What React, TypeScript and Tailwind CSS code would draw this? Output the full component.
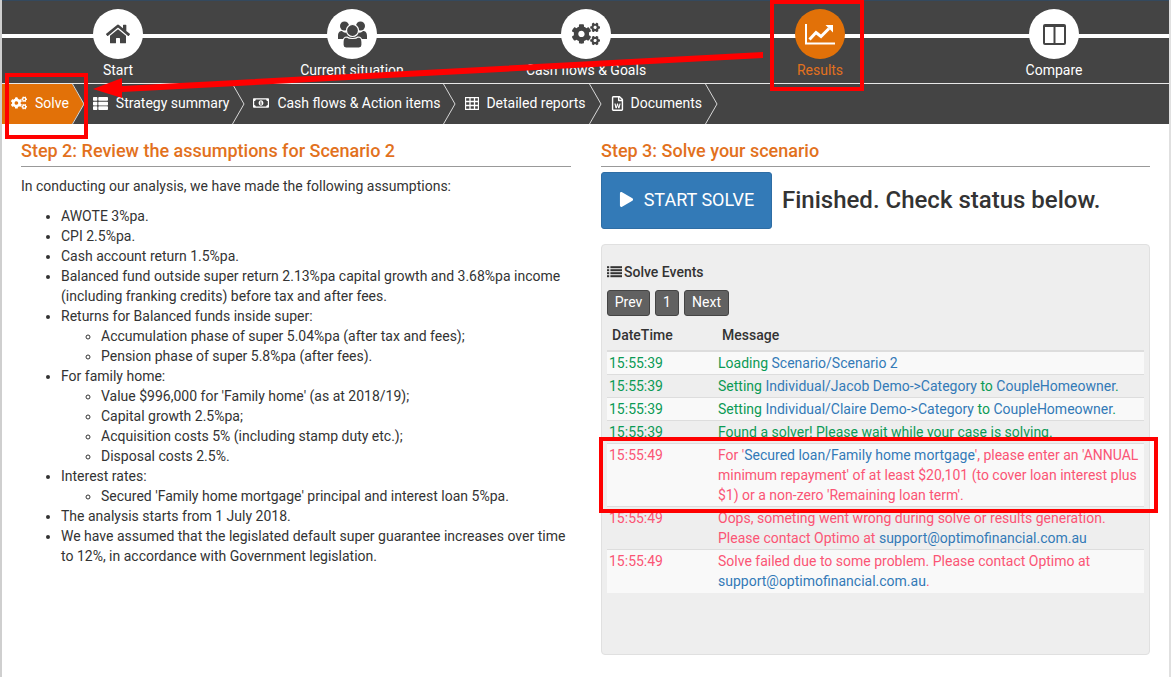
import React from "react";
import { FaHome, FaCogs, FaThList, FaRegMoneyBillAlt, FaRegFileWord, FaPlay } from "react-icons/fa";

const UsersIcon = () => (
  <svg width="29" height="27" viewBox="0 0 29 27">
    <circle cx="6.5" cy="5" r="4.5" fill="#444" />
    <circle cx="22.5" cy="5" r="4.5" fill="#444" />
    <path d="M0 15 C0 11 2 10 4 10 C6 12 8 12 9 11 L20 11 C21 12 23 12 25 10 C27 10 29 11 29 15 L29 18 L0 18 Z" fill="#444" />
    <circle cx="14.5" cy="9.5" r="6" fill="#444" stroke="#fff" strokeWidth="1.2" />
    <path d="M5 21 C5 17.5 7 16 9 16 C11 18 18 18 20 16 C22 16 24 17.5 24 21 L24 24 C24 26 22.5 27 21 27 L8 27 C6.5 27 5 26 5 24 Z" fill="#444" stroke="#fff" strokeWidth="1.2" />
  </svg>
);

const ChartIcon = () => (
  <svg width="30" height="21" viewBox="0 0 30 21">
    <path d="M1 0 V19.5 H30" fill="none" stroke="#fff" strokeWidth="2" />
    <path d="M4.5 15.5 L11 8.5 L16 12.5 L24 4.5" fill="none" stroke="#fff" strokeWidth="3" />
    <path d="M20.5 1 H28 V8.5 Z" fill="#fff" />
  </svg>
);

const ColumnsIcon = () => (
  <svg width="23" height="21" viewBox="0 0 23 21">
    <rect width="23" height="21" rx="2" fill="#444" />
    <rect x="2" y="3" width="8.5" height="16" fill="#fff" />
    <rect x="12.5" y="3" width="8.5" height="16" fill="#fff" />
  </svg>
);

const ListIcon = () => (
  <svg width="15" height="12" viewBox="0 0 15 12" fill="#333">
    {[0, 3, 6, 9].map((y) => (
      <g key={y}>
        <rect x="0" y={y + 0.2} width="2.2" height="2" />
        <rect x="3.4" y={y + 0.2} width="11.6" height="2" />
      </g>
    ))}
  </svg>
);

const TableIcon = () => (
  <svg width="14" height="13" viewBox="0 0 14 13">
    <path d="M0.5 0.5 H13.5 V12.5 H0.5 Z M0.5 4.5 H13.5 M0.5 8.5 H13.5 M5 0.5 V12.5 M9.5 0.5 V12.5" fill="none" stroke="#fff" strokeWidth="1.3" />
  </svg>
);

const steps = [
  { label: "Start", icon: <FaHome size={24} /> },
  { label: "Current situation", icon: <UsersIcon /> },
  { label: "Cash flows & Goals", icon: <FaCogs size={28} /> },
  { label: "Results", icon: <ChartIcon />, active: true },
  { label: "Compare", icon: <ColumnsIcon /> },
];

const crumbs = [
  { label: "Strategy summary", icon: <FaThList size={15} />, gapClass: "ml-[7px]", padClass: "pl-2 pr-[3px]" },
  { label: "Cash flows & Action items", icon: <FaRegMoneyBillAlt size={16} />, gapClass: "ml-2", padClass: "pl-2 pr-[3px]" },
  { label: "Detailed reports", icon: <TableIcon />, gapClass: "ml-[6px]", padClass: "pl-2 pr-[3px]" },
  { label: "Documents", icon: <FaRegFileWord size={15} />, gapClass: "ml-[5px]", padClass: "pl-2 pr-[3px]" },
];

const G = ({ children }: { children: React.ReactNode }) => <span className="text-[#0b9a55]">{children}</span>;
const R = ({ children }: { children: React.ReactNode }) => <span className="text-[#fb5575]">{children}</span>;
const B = ({ children }: { children: React.ReactNode }) => <span className="text-[#337ab7]">{children}</span>;

const rows: { t: string; green?: boolean; m: React.ReactNode }[] = [
  { t: "15:55:39", green: true, m: <G>Loading <B>Scenario/Scenario 2</B></G> },
  { t: "15:55:39", green: true, m: <G>Setting <B>Individual/Jacob Demo-&gt;Category</B> to <B>CoupleHomeowner</B>.</G> },
  { t: "15:55:39", green: true, m: <G>Setting <B>Individual/Claire Demo-&gt;Category</B> to <B>CoupleHomeowner</B>.</G> },
  { t: "15:55:39", green: true, m: <G>Found a solver! Please wait while your case is solving.</G> },
  { t: "15:55:49", m: <R>For '<B>Secured loan/Family home mortgage</B>', please enter an 'ANNUAL minimum repayment' of at least $20,101 (to cover loan interest plus $1) or a non-zero 'Remaining loan term'.</R> },
  { t: "15:55:49", m: <R>Oops, someting went wrong during solve or results generation. Please contact Optimo at <B>support@optimofinancial.com.au</B></R> },
  { t: "15:55:49", m: <R>Solve failed due to some problem. Please contact Optimo at <B>support@optimofinancial.com.au</B>.</R> },
];

function Chevron({ filled }: { filled?: boolean }) {
  return (
    <svg width="13" height="40" viewBox="0 0 13 40" className="shrink-0">
      {filled && <path d="M0 0 L12 20 L0 40 Z" fill="#e27108" />}
      <path d="M0.5 0 L12 20 L0.5 40" fill="none" stroke="#d8d8d8" strokeWidth="1" />
    </svg>
  );
}

export default function App() {
  return (
    <div className="relative h-[677px] w-[1171px] overflow-hidden border-l-2 border-r-2 border-l-[#cfcfcf] border-r-[#e0e0e0] bg-white font-['Roboto',sans-serif] text-[14px] leading-5 text-[#333]">
      <header className="-ml-px -mr-[2px] border-t border-t-[#34495e] bg-[#444]">
        <nav className="relative grid h-[83px] grid-cols-5 border-b border-b-[#e8e8e8]">
          <div className="absolute left-0 right-0 top-[33px] h-1 bg-white" />
          {steps.map((s) => (
            <div key={s.label} className="relative flex flex-col items-center pt-2">
              <div className={`flex h-[50px] w-[50px] items-center justify-center rounded-full ${s.active ? "bg-[#e27108] text-white" : "bg-white text-[#444]"}`}>
                {s.icon}
              </div>
              <span className={`mt-[1px] leading-5 ${s.active ? "text-[#e2711d]" : "text-white"}`}>{s.label}</span>
            </div>
          ))}
        </nav>
        <div className="flex h-10 text-white">
          <div className="flex items-center bg-[#e27108] pb-[2px] pl-[10px] pr-[3px]">
            <FaCogs size={16} className="mr-2" />
            <span>Solve</span>
          </div>
          <Chevron filled />
          {crumbs.map((c) => (
            <React.Fragment key={c.label}>
              <div className={`flex items-center pb-[2px] ${c.padClass}`}>
                <span className="flex w-4 justify-center">{c.icon}</span>
                <span className={c.gapClass}>{c.label}</span>
              </div>
              <Chevron />
            </React.Fragment>
          ))}
        </div>
      </header>

      <main className="flex gap-[30px] pl-[19px] pr-[19px] pt-4">
        <section className="w-[550px] shrink-0">
          <h2 className="border-b border-b-[#999] pb-[5px] text-[18px] font-medium leading-[21px] text-[#e2711d]">Step 2: Review the assumptions for Scenario 2</h2>
          <p className="mt-[9px]">In conducting our analysis, we have made the following assumptions:</p>
          <ul className="mt-[10px] list-disc pl-10">
            <li>AWOTE 3%pa.</li>
            <li>CPI 2.5%pa.</li>
            <li>Cash account return 1.5%pa.</li>
            <li>Balanced fund outside super return 2.13%pa capital growth and 3.68%pa income (including franking credits) before tax and after fees.</li>
            <li>
              Returns for Balanced funds inside super:
              <ul className="list-[circle] pl-10">
                <li>Accumulation phase of super 5.04%pa (after tax and fees);</li>
                <li>Pension phase of super 5.8%pa (after fees).</li>
              </ul>
            </li>
            <li>
              For family home:
              <ul className="list-[circle] pl-10">
                <li>Value $996,000 for 'Family home' (as at 2018/19);</li>
                <li>Capital growth 2.5%pa;</li>
                <li>Acquisition costs 5% (including stamp duty etc.);</li>
                <li>Disposal costs 2.5%.</li>
              </ul>
            </li>
            <li>
              Interest rates:
              <ul className="list-[circle] pl-10">
                <li>Secured 'Family home mortgage' principal and interest loan 5%pa.</li>
              </ul>
            </li>
            <li>The analysis starts from 1 July 2018.</li>
            <li>We have assumed that the legislated default super guarantee increases over time to 12%, in accordance with Government legislation.</li>
          </ul>
        </section>

        <section className="min-w-0 flex-1">
          <h2 className="border-b border-b-[#999] pb-[5px] text-[18px] font-medium leading-[21px] text-[#e2711d]">Step 3: Solve your scenario</h2>
          <div className="mt-[5px] flex items-center">
            <button className="flex h-[57px] w-[171px] items-center justify-center rounded-[3px] border border-[#2e6da4] bg-[#337ab7] pb-[2px] text-[18px] text-white">
              <FaPlay size={15} className="mr-[10px]" />
              START SOLVE
            </button>
            <span className="mb-[2px] ml-[10px] text-[24px] font-medium text-[#333]">Finished. Check status below.</span>
          </div>
          <div className="mt-[15px] h-[411px] rounded border border-[#e0e0e0] bg-[#eee] px-[5px] pt-[17px]">
            <div className="flex items-center font-medium text-[#333]">
              <span className="mr-[2px]"><ListIcon /></span>
              Solve Events
            </div>
            <div className="mt-2 flex gap-[5px]">
              <button className="h-[26px] w-[43px] rounded-[3px] border border-[#444] bg-[#616161] pb-[2px] text-white">Prev</button>
              <button className="h-[26px] w-[24px] rounded-[3px] border border-[#444] bg-[#616161] pb-[2px] text-white">1</button>
              <button className="h-[26px] w-[45px] rounded-[3px] border border-[#444] bg-[#616161] pb-[2px] text-white">Next</button>
            </div>
            <table className="mt-2 w-full border-collapse">
              <thead>
                <tr className="border-b-2 border-b-[#ddd] text-left">
                  <th className="h-[27px] w-[111px] pl-[5px] pt-px align-top font-medium text-[#333]">DateTime</th>
                  <th className="h-[27px] pl-[4px] pt-px align-top font-medium text-[#333]">Message</th>
                </tr>
              </thead>
              <tbody>
                {rows.map((r, i) => (
                  <tr key={i} className={`border-b border-b-[#ddd] last:border-b-0 ${i % 2 === 0 ? "bg-[#f9f9f9]" : ""}`}>
                    <td className={`pl-[2px] pt-px align-top ${i === rows.length - 1 ? "pb-[2px]" : "pb-px"} ${r.green ? "text-[#0b9a55]" : "text-[#fb5575]"}`}>{r.t}</td>
                    <td className={`pr-[2px] pt-px align-top ${i === rows.length - 1 ? "pb-[2px]" : "pb-px"}`}>{r.m}</td>
                  </tr>
                ))}
              </tbody>
            </table>
          </div>
        </section>
      </main>

      {/* Red annotations drawn over the page */}
      <div className="absolute left-[768px] top-0 h-[91px] w-[94px] border-4 border-[#f00]" />
      <div className="absolute left-[3px] top-[73px] h-[66px] w-[83px] border-4 border-[#f00]" />
      <div className="absolute left-[597px] top-[437px] h-[76px] w-[559px] border-4 border-[#f00]" />
      <svg className="pointer-events-none absolute left-[-2px] top-0" width="1171" height="677" viewBox="0 0 1171 677">
        <path d="M763 52 L763 58 L122 92 L122 98 L93 89 L122 78 L122 86 Z" fill="#f00" />
      </svg>
    </div>
  );
}
